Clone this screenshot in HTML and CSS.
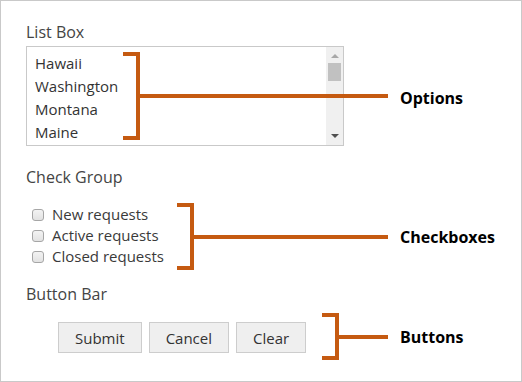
FILE: index.html
```html
<!DOCTYPE html>
<html lang="en">
<head>
  <meta charset="UTF-8">
  <title>Form controls</title>
  <link rel="stylesheet" href="styles.css">
</head>
<body>
  <div class="panel">

    <!-- list box -->
    <div class="field field-list">
      <div class="field-label">List Box</div>
      <div class="listbox">
        <div class="options">
          <div class="option">Hawaii</div>
          <div class="option">Washington</div>
          <div class="option">Montana</div>
          <div class="option">Maine</div>
        </div>
        <div class="scrollbar">
          <span class="arrow arrow-up"></span>
          <span class="thumb"></span>
          <span class="arrow arrow-down"></span>
        </div>
      </div>
      <div class="callout callout-list">
        <div class="bracket"></div>
        <div class="lead"></div>
        <div class="callout-label">Options</div>
      </div>
    </div>

    <!-- check group -->
    <div class="field field-check">
      <div class="field-label">Check Group</div>
      <div class="checks">
        <label class="check"><span class="box"></span>New requests</label>
        <label class="check"><span class="box"></span>Active requests</label>
        <label class="check"><span class="box"></span>Closed requests</label>
      </div>
      <div class="callout callout-check">
        <div class="bracket"></div>
        <div class="lead"></div>
        <div class="callout-label">Checkboxes</div>
      </div>
    </div>

    <!-- button bar -->
    <div class="field field-buttons">
      <div class="field-label">Button Bar</div>
      <div class="button-bar">
        <button class="btn">Submit</button>
        <button class="btn">Cancel</button>
        <button class="btn">Clear</button>
      </div>
      <div class="callout callout-buttons">
        <div class="bracket"></div>
        <div class="lead"></div>
        <div class="callout-label">Buttons</div>
      </div>
    </div>

  </div>
</body>
</html>
```

FILE: styles.css
```css
:root {
  --accent: #c55a11;
  --line: #c9c9c9;
  --text: #3a3a3a;
}

body {
  margin: 0;
  font-family: 'Open Sans', 'Noto Sans', sans-serif;
  color: var(--text);
}

.panel {
  width: 522px;
  height: 382px;
  box-sizing: border-box;
  border: 1px solid var(--line);
  padding: 21px 0 0 25px;
}

.field {
  position: relative;
}

.field-label {
  font-size: 16px;
  line-height: 20px;
  color: #444;
}

/* list box */
.listbox {
  display: flex;
  width: 318px;
  height: 100px;
  box-sizing: border-box;
  border: 1px solid var(--line);
  margin-top: 4px;
}

.options {
  flex: 1;
  padding: 5px 0 0 8px;
}

.option {
  font-size: 15px;
  line-height: 23px;
  color: #333;
}

.scrollbar {
  width: 17px;
  background: #f0f0f0;
  display: flex;
  flex-direction: column;
  align-items: center;
}

.arrow {
  width: 0;
  height: 0;
  border-left: 4px solid transparent;
  border-right: 4px solid transparent;
}

.arrow-up {
  border-bottom: 4px solid #a8a8a8;
  margin-top: 7px;
}

.arrow-down {
  border-top: 4px solid #505050;
  margin-top: auto;
  margin-bottom: 7px;
}

.thumb {
  width: 13px;
  height: 18px;
  background: #c1c1c1;
  margin-top: 5px;
}

/* check group */
.field-check {
  margin-top: 21px;
}

.checks {
  margin-top: 17px;
  padding-left: 6px;
}

.check {
  display: flex;
  align-items: center;
  font-size: 15px;
  line-height: 21px;
  color: #3a3a3a;
}

.box {
  width: 10px;
  height: 10px;
  border: 1px solid #a6a6a6;
  border-radius: 3px;
  background: linear-gradient(#f3f3f3, #e2e2e2);
  margin-right: 8px;
}

/* button bar */
.field-buttons {
  margin-top: 17px;
}

.button-bar {
  display: flex;
  gap: 7px;
  margin-top: 18px;
  padding-left: 32px;
}

.btn {
  height: 31px;
  padding: 0 16px;
  font-family: inherit;
  font-size: 15px;
  color: #333;
  background: #efefef;
  border: 1px solid #cdcdcd;
  border-radius: 0;
}

/* annotations */
.callout {
  position: absolute;
  right: 23px;
  display: flex;
  align-items: center;
}

.bracket {
  width: 17px;
  box-sizing: border-box;
  height: 100%;
  border: 4px solid var(--accent);
  border-left: none;
}

.lead {
  flex: 1;
  height: 4px;
  background: var(--accent);
}

.callout-label {
  width: 110px;
  box-sizing: border-box;
  padding-left: 12px;
  font-size: 16px;
  font-weight: bold;
  color: #000;
}

.callout-list {
  left: 97px;
  top: 30px;
  height: 88px;
}

.callout-list .callout-label {
  padding-top: 3px;
}

.callout-check {
  left: 151px;
  top: 36px;
  height: 67px;
}

.callout-buttons {
  left: 296px;
  top: 29px;
  height: 47px;
}
```
